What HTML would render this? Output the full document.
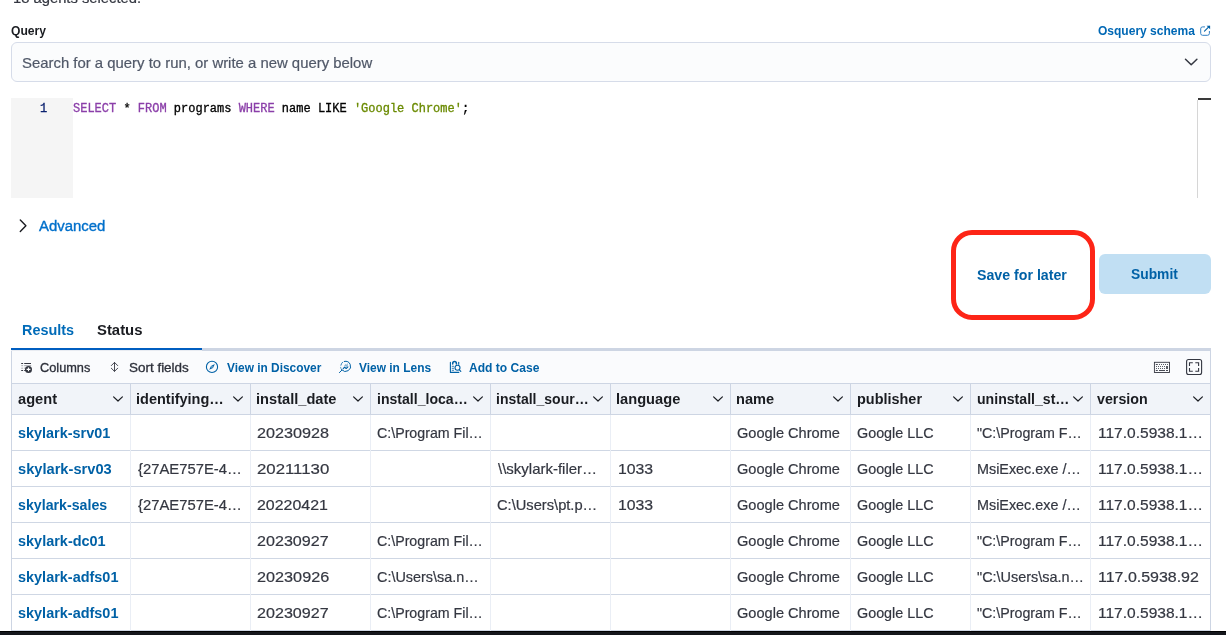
<!DOCTYPE html>
<html><head><meta charset="utf-8">
<style>
*{box-sizing:border-box;margin:0;padding:0}
html,body{width:1226px;height:635px;overflow:hidden;background:#fff}
body{position:relative;font-family:"Liberation Sans",sans-serif;color:#1a1c21;-webkit-font-smoothing:antialiased;will-change:transform}
.abs{position:absolute;white-space:nowrap}
.b{font-weight:700}
.blue{color:#0061a6}
.top{font-size:14px;line-height:20px;color:#343741;-webkit-text-stroke:.2px #343741}
.qlabel{left:11px;top:22px;font-size:12px;line-height:18px;font-weight:700;color:#1a1c21}
.osq{font-size:12px;line-height:18px;font-weight:700;color:#0068b5}
#combo{left:11px;top:42px;width:1200px;height:40px;border:1px solid #d6dce9;border-radius:6px;background:#fbfcfd}
.ph{left:23px;top:52px;font-size:14px;line-height:20px;color:#505868;font-size:14.4px;-webkit-text-stroke:.2px #505868}
#gutter{left:11px;top:98px;width:62px;height:99.5px;background:#f5f5f5}
#ln{left:40px;top:100px;font:12px/18px "Liberation Mono",monospace;color:#0b216f;-webkit-text-stroke:.3px #0b216f}
#code{left:73px;top:100px;font:12px/18px "Liberation Mono",monospace;color:#000;-webkit-text-stroke:.3px}
.kw{color:#8b3fa9}.str{color:#6a8a00}
#ruler{left:1197px;top:100px;width:1px;height:97.5px;background:#d6d6d6}
#rulertop{left:1198px;top:98px;width:13px;height:2px;background:#3a3a3a}
.adv{left:39px;top:216px;font-size:14px;line-height:20px;color:#0070cb;font-weight:400;-webkit-text-stroke:.35px #0070cb}
#redbox{left:951px;top:230px;width:144px;height:90px;border:5px solid #fd2517;border-radius:21px}
.save{left:977px;top:265px;font-size:14px;line-height:20px;font-weight:700;color:#0061a6}
#submitbtn{left:1099px;top:254px;width:112px;height:40px;border-radius:6px;background:#c1dff3}
.submit{color:#0061a6;font-size:14px;line-height:20px;font-weight:700}
#tabline{left:11px;top:348px;width:1200px;height:3px;background:#cdd5e3}
#tabblue{left:11px;top:348px;width:191px;height:3px;background:#e8ebf1;border-top:2px solid #005ec0}
.t1{font-size:14px;line-height:20px;font-weight:700;color:#006bb8}
.t2{left:98px;top:320px;font-size:14px;line-height:20px;font-weight:700;color:#1a1c21}
#grid{left:11px;top:351px;width:1200px;height:280px;background:#fff;border-left:1px solid #cdd5e3;border-right:1px solid #cdd5e3}
#toolbar{left:11px;top:351px;width:1200px;height:32px;background:#fafbfd;border-left:1px solid #cdd5e3;border-right:1px solid #cdd5e3}
.tb{font-size:12px;line-height:18px;color:#2d303a;-webkit-text-stroke:.3px #2d303a}
.tbb{font-size:12px;line-height:18px;color:#0061a6;font-weight:700}
#hdr{left:11px;top:383px;width:1200px;height:32px;background:#f1f4f9;border:1px solid #cdd5e3}
.hc{font-size:14.4px;line-height:20px;font-weight:700;color:#1a1c21}
.vl{top:415px;width:1px;height:216px;background:#eaeef5}
.vh{top:384px;width:1px;height:30px;background:#cdd5e3}
.hl{left:12px;width:1198px;height:1px;background:#cfd7e4}
.c{font-size:14.4px;line-height:20px;color:#343741;-webkit-text-stroke:.2px #343741}
.a{font-size:14.4px;line-height:20px;color:#0061a6;font-weight:700}
#black{left:0;top:631px;width:1226px;height:4px;background:#15171c;border-top:1px solid #000}
svg{position:absolute;overflow:visible}
</style></head><body>



<div id="combo" class="abs"></div>

<div id="gutter" class="abs"></div>
<div id="ln" class="abs">1</div>
<div id="code" class="abs"><span class="kw">SELECT</span> * <span class="kw">FROM</span> programs <span class="kw">WHERE</span> name LIKE <span class="str">'Google Chrome'</span>;</div>
<div id="ruler" class="abs"></div><div id="rulertop" class="abs"></div>

<div id="redbox" class="abs"></div>

<div id="submitbtn" class="abs"></div>
<div id="tabline" class="abs"></div><div id="tabblue" class="abs"></div>

<div id="grid" class="abs"></div>
<div id="toolbar" class="abs"></div>
<div id="hdr" class="abs"></div>
<div class="abs hl" style="top:450px"></div>
<div class="abs hl" style="top:486px"></div>
<div class="abs hl" style="top:522px"></div>
<div class="abs hl" style="top:558px"></div>
<div class="abs hl" style="top:594px"></div>
<div class="abs hl" style="top:630px"></div>
<div class="abs vl" style="left:130px"></div>
<div class="abs vh" style="left:130px"></div>
<div class="abs vl" style="left:250px"></div>
<div class="abs vh" style="left:250px"></div>
<div class="abs vl" style="left:370px"></div>
<div class="abs vh" style="left:370px"></div>
<div class="abs vl" style="left:490px"></div>
<div class="abs vh" style="left:490px"></div>
<div class="abs vl" style="left:610px"></div>
<div class="abs vh" style="left:610px"></div>
<div class="abs vl" style="left:730px"></div>
<div class="abs vh" style="left:730px"></div>
<div class="abs vl" style="left:850px"></div>
<div class="abs vh" style="left:850px"></div>
<div class="abs vl" style="left:970px"></div>
<div class="abs vh" style="left:970px"></div>
<div class="abs vl" style="left:1090px"></div>
<div class="abs vh" style="left:1090px"></div>
<svg style="left:113px;top:396px" width="10" height="6" viewBox="0 0 10 6"><path d="M0.6 0.9 L5 5 L9.4 0.9" fill="none" stroke="#1a1c21" stroke-width="1.2" stroke-linecap="round" stroke-linejoin="round"/></svg>
<svg style="left:233px;top:396px" width="10" height="6" viewBox="0 0 10 6"><path d="M0.6 0.9 L5 5 L9.4 0.9" fill="none" stroke="#1a1c21" stroke-width="1.2" stroke-linecap="round" stroke-linejoin="round"/></svg>
<svg style="left:353px;top:396px" width="10" height="6" viewBox="0 0 10 6"><path d="M0.6 0.9 L5 5 L9.4 0.9" fill="none" stroke="#1a1c21" stroke-width="1.2" stroke-linecap="round" stroke-linejoin="round"/></svg>
<svg style="left:473px;top:396px" width="10" height="6" viewBox="0 0 10 6"><path d="M0.6 0.9 L5 5 L9.4 0.9" fill="none" stroke="#1a1c21" stroke-width="1.2" stroke-linecap="round" stroke-linejoin="round"/></svg>
<svg style="left:593px;top:396px" width="10" height="6" viewBox="0 0 10 6"><path d="M0.6 0.9 L5 5 L9.4 0.9" fill="none" stroke="#1a1c21" stroke-width="1.2" stroke-linecap="round" stroke-linejoin="round"/></svg>
<svg style="left:713px;top:396px" width="10" height="6" viewBox="0 0 10 6"><path d="M0.6 0.9 L5 5 L9.4 0.9" fill="none" stroke="#1a1c21" stroke-width="1.2" stroke-linecap="round" stroke-linejoin="round"/></svg>
<svg style="left:833px;top:396px" width="10" height="6" viewBox="0 0 10 6"><path d="M0.6 0.9 L5 5 L9.4 0.9" fill="none" stroke="#1a1c21" stroke-width="1.2" stroke-linecap="round" stroke-linejoin="round"/></svg>
<svg style="left:953px;top:396px" width="10" height="6" viewBox="0 0 10 6"><path d="M0.6 0.9 L5 5 L9.4 0.9" fill="none" stroke="#1a1c21" stroke-width="1.2" stroke-linecap="round" stroke-linejoin="round"/></svg>
<svg style="left:1073px;top:396px" width="10" height="6" viewBox="0 0 10 6"><path d="M0.6 0.9 L5 5 L9.4 0.9" fill="none" stroke="#1a1c21" stroke-width="1.2" stroke-linecap="round" stroke-linejoin="round"/></svg>
<svg style="left:1193px;top:396px" width="10" height="6" viewBox="0 0 10 6"><path d="M0.6 0.9 L5 5 L9.4 0.9" fill="none" stroke="#1a1c21" stroke-width="1.2" stroke-linecap="round" stroke-linejoin="round"/></svg>
<div id="h0" class="abs hc" style="left:17.68px;top:389px;transform-origin:0 0;transform:scaleX(1.0167)">agent</div>
<div id="h1" class="abs hc" style="left:136.49px;top:389px;transform-origin:0 0;transform:scaleX(1.0082)">identifying…</div>
<div id="h2" class="abs hc" style="left:256.43px;top:389px;transform-origin:0 0;transform:scaleX(1.0168)">install_date</div>
<div id="h3" class="abs hc" style="left:376.51px;top:389px;transform-origin:0 0;transform:scaleX(0.9784)">install_loca…</div>
<div id="h4" class="abs hc" style="left:495.99px;top:389px;transform-origin:0 0;transform:scaleX(0.9742)">install_sour…</div>
<div id="h5" class="abs hc" style="left:616.18px;top:389px;transform-origin:0 0;transform:scaleX(1.0177)">language</div>
<div id="h6" class="abs hc" style="left:736.20px;top:389px;transform-origin:0 0;transform:scaleX(1.0138)">name</div>
<div id="h7" class="abs hc" style="left:856.50px;top:389px;transform-origin:0 0;transform:scaleX(1.0037)">publisher</div>
<div id="h8" class="abs hc" style="left:976.89px;top:389px;transform-origin:0 0;transform:scaleX(0.9797)">uninstall_st…</div>
<div id="h9" class="abs hc" style="left:1097.22px;top:389px;transform-origin:0 0;transform:scaleX(0.9914)">version</div>
<div id="c0_0" class="abs a" style="left:17.94px;top:423px;transform-origin:0 0;transform:scaleX(1.0017)">skylark-srv01</div>
<div id="c0_2" class="abs c" style="left:257.12px;top:423px;transform-origin:0 0;transform:scaleX(1.1249)">20230928</div>
<div id="c0_3" class="abs c" style="left:376.98px;top:423px;transform-origin:0 0;transform:scaleX(0.9876)">C:\Program Fil…</div>
<div id="c0_6" class="abs c" style="left:737.02px;top:423px;transform-origin:0 0;transform:scaleX(1.0129)">Google Chrome</div>
<div id="c0_7" class="abs c" style="left:857.03px;top:423px;transform-origin:0 0;transform:scaleX(0.9970)">Google LLC</div>
<div id="c0_8" class="abs c" style="left:977.02px;top:423px;transform-origin:0 0;transform:scaleX(0.9894)">&quot;C:\Program F…</div>
<div id="c0_9" class="abs c" style="left:1097.90px;top:423px;transform-origin:0 0;transform:scaleX(1.0787)">117.0.5938.1…</div>
<div id="c1_0" class="abs a" style="left:17.86px;top:459px;transform-origin:0 0;transform:scaleX(1.0180)">skylark-srv03</div>
<div id="c1_1" class="abs c" style="left:138.00px;top:459px;transform-origin:0 0;transform:scaleX(1.0293)">{27AE757E-4…</div>
<div id="c1_2" class="abs c" style="left:257.03px;top:459px;transform-origin:0 0;transform:scaleX(1.1674)">20211130</div>
<div id="c1_4" class="abs c" style="left:497.66px;top:459px;transform-origin:0 0;transform:scaleX(1.0416)">\\skylark-filer…</div>
<div id="c1_5" class="abs c" style="left:617.83px;top:459px;transform-origin:0 0;transform:scaleX(1.0980)">1033</div>
<div id="c1_6" class="abs c" style="left:737.02px;top:459px;transform-origin:0 0;transform:scaleX(1.0129)">Google Chrome</div>
<div id="c1_7" class="abs c" style="left:857.03px;top:459px;transform-origin:0 0;transform:scaleX(0.9970)">Google LLC</div>
<div id="c1_8" class="abs c" style="left:976.57px;top:459px;transform-origin:0 0;transform:scaleX(0.9987)">MsiExec.exe /…</div>
<div id="c1_9" class="abs c" style="left:1097.90px;top:459px;transform-origin:0 0;transform:scaleX(1.0787)">117.0.5938.1…</div>
<div id="c2_0" class="abs a" style="left:17.97px;top:495px;transform-origin:0 0;transform:scaleX(0.9866)">skylark-sales</div>
<div id="c2_1" class="abs c" style="left:138.00px;top:495px;transform-origin:0 0;transform:scaleX(1.0293)">{27AE757E-4…</div>
<div id="c2_2" class="abs c" style="left:257.15px;top:495px;transform-origin:0 0;transform:scaleX(1.1080)">20220421</div>
<div id="c2_4" class="abs c" style="left:496.95px;top:495px;transform-origin:0 0;transform:scaleX(1.0194)">C:\Users\pt.p…</div>
<div id="c2_5" class="abs c" style="left:617.83px;top:495px;transform-origin:0 0;transform:scaleX(1.0980)">1033</div>
<div id="c2_6" class="abs c" style="left:737.02px;top:495px;transform-origin:0 0;transform:scaleX(1.0129)">Google Chrome</div>
<div id="c2_7" class="abs c" style="left:857.03px;top:495px;transform-origin:0 0;transform:scaleX(0.9970)">Google LLC</div>
<div id="c2_8" class="abs c" style="left:976.57px;top:495px;transform-origin:0 0;transform:scaleX(0.9987)">MsiExec.exe /…</div>
<div id="c2_9" class="abs c" style="left:1097.90px;top:495px;transform-origin:0 0;transform:scaleX(1.0787)">117.0.5938.1…</div>
<div id="c3_0" class="abs a" style="left:17.92px;top:531px;transform-origin:0 0;transform:scaleX(1.0053)">skylark-dc01</div>
<div id="c3_2" class="abs c" style="left:257.13px;top:531px;transform-origin:0 0;transform:scaleX(1.1195)">20230927</div>
<div id="c3_3" class="abs c" style="left:376.98px;top:531px;transform-origin:0 0;transform:scaleX(0.9876)">C:\Program Fil…</div>
<div id="c3_6" class="abs c" style="left:737.02px;top:531px;transform-origin:0 0;transform:scaleX(1.0129)">Google Chrome</div>
<div id="c3_7" class="abs c" style="left:857.03px;top:531px;transform-origin:0 0;transform:scaleX(0.9970)">Google LLC</div>
<div id="c3_8" class="abs c" style="left:977.02px;top:531px;transform-origin:0 0;transform:scaleX(0.9894)">&quot;C:\Program F…</div>
<div id="c3_9" class="abs c" style="left:1097.90px;top:531px;transform-origin:0 0;transform:scaleX(1.0787)">117.0.5938.1…</div>
<div id="c4_0" class="abs a" style="left:17.94px;top:567px;transform-origin:0 0;transform:scaleX(1.0044)">skylark-adfs01</div>
<div id="c4_2" class="abs c" style="left:257.12px;top:567px;transform-origin:0 0;transform:scaleX(1.1277)">20230926</div>
<div id="c4_3" class="abs c" style="left:376.94px;top:567px;transform-origin:0 0;transform:scaleX(1.0016)">C:\Users\sa.n…</div>
<div id="c4_6" class="abs c" style="left:737.02px;top:567px;transform-origin:0 0;transform:scaleX(1.0129)">Google Chrome</div>
<div id="c4_7" class="abs c" style="left:857.03px;top:567px;transform-origin:0 0;transform:scaleX(0.9970)">Google LLC</div>
<div id="c4_8" class="abs c" style="left:977.02px;top:567px;transform-origin:0 0;transform:scaleX(1.0034)">&quot;C:\Users\sa.n…</div>
<div id="c4_9" class="abs c" style="left:1097.80px;top:567px;transform-origin:0 0;transform:scaleX(1.1090)">117.0.5938.92</div>
<div id="c5_0" class="abs a" style="left:17.94px;top:603px;transform-origin:0 0;transform:scaleX(1.0044)">skylark-adfs01</div>
<div id="c5_2" class="abs c" style="left:257.13px;top:603px;transform-origin:0 0;transform:scaleX(1.1195)">20230927</div>
<div id="c5_3" class="abs c" style="left:376.98px;top:603px;transform-origin:0 0;transform:scaleX(0.9876)">C:\Program Fil…</div>
<div id="c5_6" class="abs c" style="left:737.02px;top:603px;transform-origin:0 0;transform:scaleX(1.0129)">Google Chrome</div>
<div id="c5_7" class="abs c" style="left:857.03px;top:603px;transform-origin:0 0;transform:scaleX(0.9970)">Google LLC</div>
<div id="c5_8" class="abs c" style="left:977.02px;top:603px;transform-origin:0 0;transform:scaleX(0.9894)">&quot;C:\Program F…</div>
<div id="c5_9" class="abs c" style="left:1097.90px;top:603px;transform-origin:0 0;transform:scaleX(1.0787)">117.0.5938.1…</div>
<div id="tb0" class="abs tb" style="left:40.04px;top:359px;transform-origin:0 0;transform:scaleX(1.0634)">Columns</div>
<div id="tb1" class="abs tb" style="left:128.65px;top:359px;transform-origin:0 0;transform:scaleX(1.1203)">Sort fields</div>
<div id="tb2" class="abs tbb" style="left:226.62px;top:359px;transform-origin:0 0;transform:scaleX(0.9911)">View in Discover</div>
<div id="tb3" class="abs tbb" style="left:359.30px;top:359px;transform-origin:0 0;transform:scaleX(0.9942)">View in Lens</div>
<div id="tb4" class="abs tbb" style="left:469.35px;top:359px;transform-origin:0 0;transform:scaleX(1.0046)">Add to Case</div>
<div id="top" class="abs top" style="left:12.55px;top:-12px;transform-origin:0 0;transform:scaleX(1.0545)">18 agents selected.</div>
<div id="qlabel" class="abs qlabel" style="left:10.60px;top:22px;transform-origin:0 0;transform:scaleX(1.0110)">Query</div>
<div id="osq" class="abs osq" style="left:1097.77px;top:22px;transform-origin:0 0;transform:scaleX(1.0010)">Osquery schema</div>
<div id="ph" class="abs ph" style="left:22.36px;top:53px;transform-origin:0 0;transform:scaleX(1.0349)">Search for a query to run, or write a new query below</div>
<div id="adv" class="abs adv" style="left:38.86px;top:216px;transform-origin:0 0;transform:scaleX(1.0668)">Advanced</div>
<div id="save" class="abs save" style="left:977.17px;top:265px;transform-origin:0 0;transform:scaleX(1.0128)">Save for later</div>
<div id="submit" class="abs submit" style="left:1131.46px;top:264px;transform-origin:0 0;transform:scaleX(0.9871)">Submit</div>
<div id="t1" class="abs t1" style="left:22.24px;top:320px;transform-origin:0 0;transform:scaleX(1.0281)">Results</div>
<div id="t2" class="abs t2" style="left:97.37px;top:320px;transform-origin:0 0;transform:scaleX(1.0619)">Status</div>
<svg id="icons" style="left:0;top:0" width="1226" height="635" viewBox="0 0 1226 635" fill="none">
<!-- popout -->
<g stroke="#2f7fc4" stroke-width="1" stroke-linecap="round" stroke-linejoin="round">
<path d="M1204.6 26.9H1202.6a1.9 1.9 0 0 0-1.9 1.9V33.4a1.9 1.9 0 0 0 1.9 1.9H1207.5a1.9 1.9 0 0 0 1.9-1.9V31.4"/>
</g>
<path d="M1204.5 31.2L1209.3 26.4" stroke="#0061a6" stroke-width="1.1" stroke-linecap="round"/>
<path d="M1206.6 25.7H1210.1V29.2Z" fill="#0061a6"/>
<!-- combo chevron -->
<path d="M1185.5 59.2L1191.2 64.7L1196.9 59.2" stroke="#343741" stroke-width="1.5" stroke-linecap="round" stroke-linejoin="round"/>
<!-- advanced chevron -->
<path d="M20.3 220.1L25.9 225.8L20.3 231.5" stroke="#1a1c21" stroke-width="1.4" stroke-linecap="round" stroke-linejoin="round"/>
<!-- columns icon -->
<g fill="#343741">
<rect x="21.2" y="363" width="1.9" height="1"/><rect x="24.2" y="363" width="6.8" height="1"/>
<rect x="21.2" y="365.2" width="1.9" height="1" opacity=".4"/><rect x="24.2" y="365.2" width="7" height="1" opacity=".45"/>
<rect x="21.2" y="367.7" width="1.9" height="1" opacity=".4"/><rect x="24.2" y="367.7" width="2" height="1" opacity=".45"/>
<rect x="21.2" y="370" width="1.9" height="1"/><rect x="24.2" y="370" width="2" height="1"/>
<circle cx="28.5" cy="369.4" r="3.5"/>
</g>
<path d="M26.6 369.4H30.4M28.5 367.5V371.3" stroke="#fff" stroke-width="1.1"/>
<!-- sort icon -->
<path d="M114.5 362.6V371.2M111.3 365.6L114.5 362.4L117.7 365.6M111.3 368.2L114.5 371.4L117.7 368.2" stroke="#343741" stroke-width=".9" stroke-linecap="round" stroke-linejoin="round"/>
<!-- discover icon -->
<circle cx="212" cy="366.9" r="5.6" stroke="#0061a6" stroke-width="1.1"/>
<path d="M209.2 369.7L211 365.9L214.8 364.1L213 367.9Z" fill="#0061a6"/>
<circle cx="212" cy="366.9" r=".7" fill="#fafbfd"/>
<!-- lens icon -->
<g stroke="#0061a6" stroke-linecap="round" stroke-linejoin="round">
<path d="M344.3 361.4A5.1 5.1 0 1 1 341.7 369.8" stroke-width="1"/>
<path d="M340.9 365.2A5.1 5.1 0 0 1 342.6 362.2" stroke-width="1" opacity=".8"/>
<path d="M341.7 369.8A5.1 5.1 0 0 1 340.6 367.3" stroke-width="1" opacity=".6"/>
<path d="M341.7 370.3L339.4 372.6" stroke-width="1"/>
<path d="M343.2 368.7L344.6 367.2L346.2 368.5L347.9 366.9" stroke-width="1.1"/>
</g>
<path d="M344 366L345.5 363.9L346.4 364.8L347.8 363V365.8L346.3 367L345 365.9Z" fill="#0061a6" opacity=".45"/>
<!-- case icon -->
<g stroke="#0061a6" stroke-linecap="round" stroke-linejoin="round">
<path d="M450.4 362.4V372.4H458.8" stroke-width="1.1"/>
<path d="M458.7 362.4V364.3" stroke-width="1.1"/>
<path d="M452.7 363.9V363.4A1.85 1.85 0 0 1 456.4 363.4V363.9" stroke-width="1.5"/>
<path d="M452.2 366.3H453.6M452.2 368.3H453.6M452.2 370.3H453.6" stroke-width="1" opacity=".8"/>
<circle cx="457.5" cy="367.8" r="2.5" stroke-width="1.1"/>
<path d="M459.4 369.8L460.8 371.3" stroke-width="1.2"/>
</g>
<!-- keyboard icon -->
<rect x="1154.4" y="362.3" width="15.1" height="10.2" stroke="#343741" stroke-width=".9"/>
<g fill="#343741">
<rect x="1155.8" y="364" width="2" height=".9"/>
<rect x="1159.1" y="364" width=".9" height=".9"/><rect x="1161.1" y="364" width=".9" height=".9"/><rect x="1163.1" y="364" width=".9" height=".9"/><rect x="1165.1" y="364" width=".9" height=".9"/><rect x="1167.1" y="364" width=".9" height=".9"/>
<rect x="1156" y="366" width=".9" height=".9"/><rect x="1158" y="366" width=".9" height=".9"/><rect x="1160" y="366" width=".9" height=".9"/><rect x="1162" y="366" width=".9" height=".9"/><rect x="1164" y="366" width=".9" height=".9"/>
<rect x="1156" y="368" width=".9" height=".9"/><rect x="1158" y="368" width=".9" height=".9"/><rect x="1160" y="368" width=".9" height=".9"/><rect x="1162" y="368" width=".9" height=".9"/><rect x="1164" y="368" width=".9" height=".9"/>
<rect x="1166.2" y="366" width="1.6" height="3"/>
<rect x="1155.8" y="370" width="2" height=".9"/><rect x="1159" y="370" width="6" height=".9"/><rect x="1166" y="370" width="2" height=".9"/>
</g>
<!-- fullscreen icon -->
<rect x="1186.6" y="359.5" width="15" height="15" rx="2" stroke="#343741" stroke-width="1.1"/>
<path d="M1189.5 366V362.7H1192.8M1195.3 362.7H1198.6V366M1198.6 368V371.3H1195.3M1192.8 371.3H1189.5V368" stroke="#343741" stroke-width="1.1"/>
</svg>
<div id="black" class="abs"></div>
</body></html>
